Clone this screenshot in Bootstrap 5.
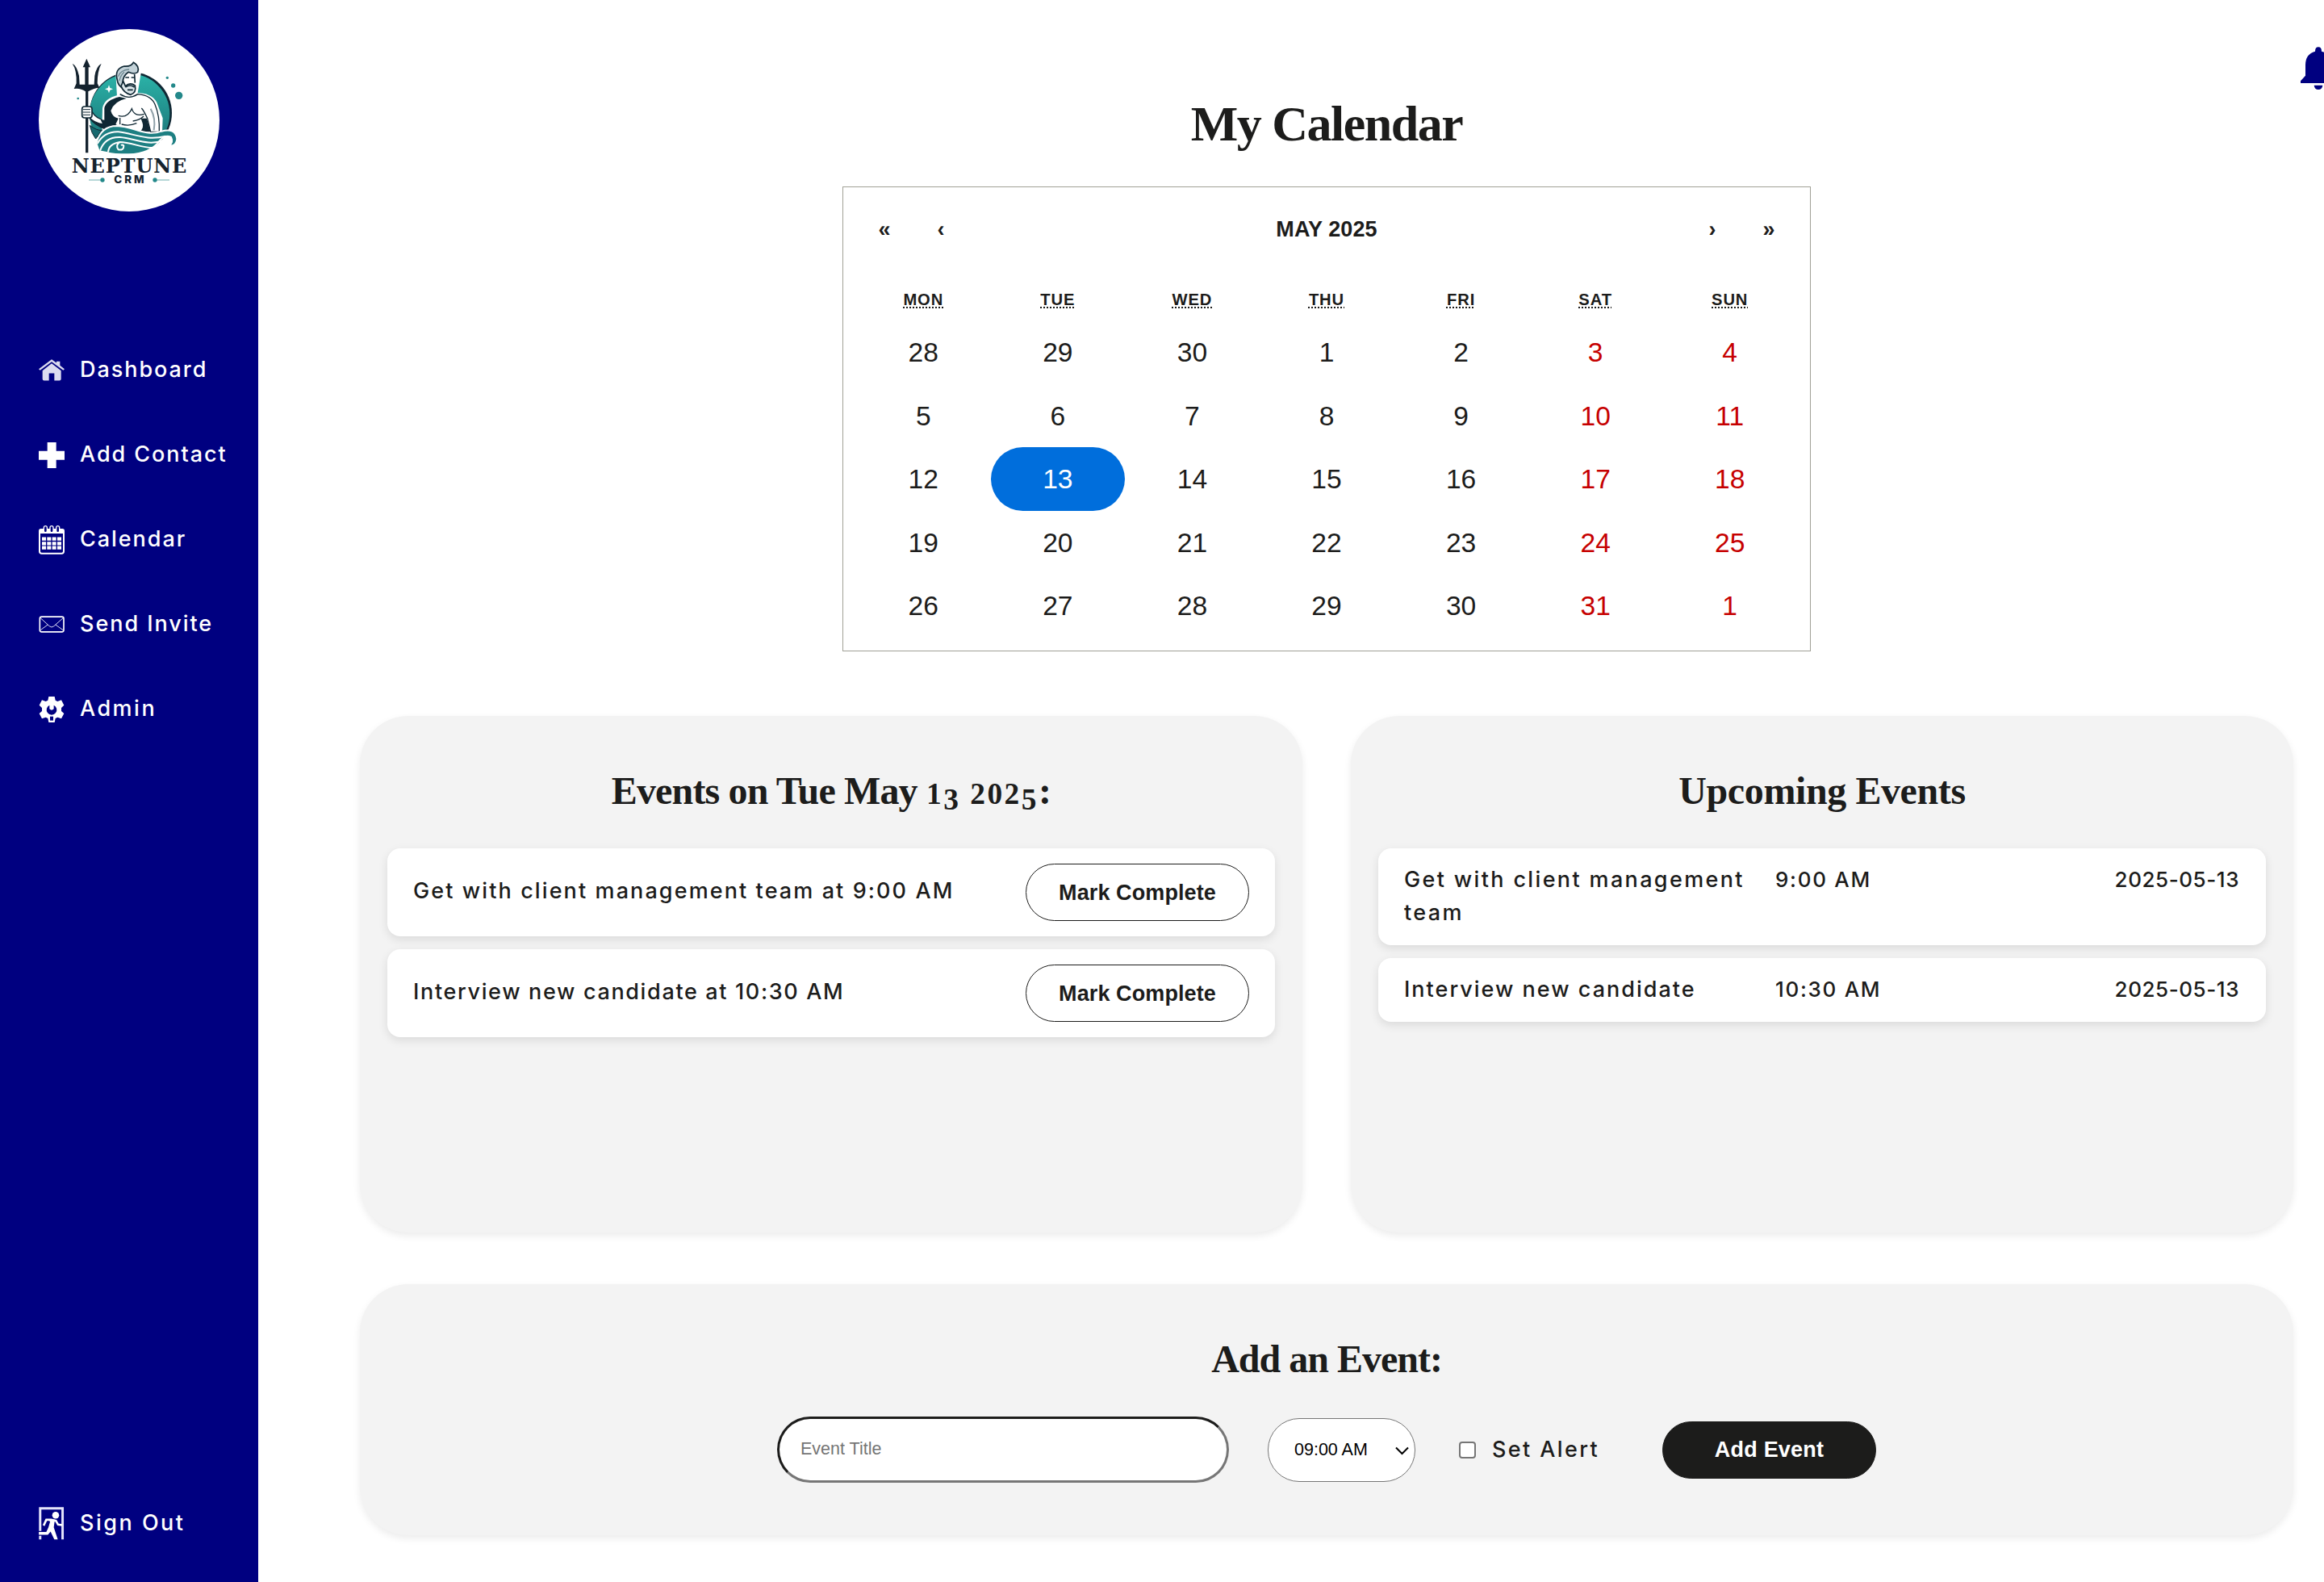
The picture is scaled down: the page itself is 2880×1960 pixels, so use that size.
<!DOCTYPE html>
<html lang="en">
<head>
<meta charset="utf-8">
<title>Neptune CRM</title>
<meta name="viewport" content="width=device-width, initial-scale=1">
<link href="https://cdn.jsdelivr.net/npm/bootstrap@5.3.0/dist/css/bootstrap.min.css" rel="stylesheet">
<style>
  body { font-family: Inter, "Open Sans", sans-serif; color: #1c1c1b; height: 1960px; background: #fff; font-size: 27px; font-weight: 450; }
  .side-panel { width: 320px; background: #000080; padding: 36px 0 20px 48px; }
  .side-panel .brand { width: 224px; height: 226px; }
  .side-menu { margin-top: 144px; }
  .side-link { height: 105px; gap: 19px; color: #fff; font-size: 27px; font-weight: 500; letter-spacing: 1.95px; text-decoration: none; white-space: nowrap; }
  .side-link svg { width: 32px; flex: none; }
  .side-short { letter-spacing: 2.5px; }
  .page-main { padding: 113px 38px 0 126px; overflow: hidden; }
  .alert-bell { right: -15px; top: 58px; width: 44px; height: 54px; }
  h1, h2 { font-family: "Liberation Serif", serif; font-weight: 700; white-space: nowrap; }
  h1 { font-size: 62px; line-height: 80px; margin: 0 0 38px; letter-spacing: -1.5px; }
  h2 { font-size: 48px; line-height: 60px; margin: 0 0 41px; letter-spacing: -.4px; }
  .day-title { letter-spacing: -.85px; }
  .form-title { letter-spacing: -1px; }
  .oldstyle { font-size: .78em; line-height: 0; letter-spacing: 2.5px; }
  .oldstyle i { font-style: normal; vertical-align: -.2em; line-height: 0; }
  .month-box { width: 1200px; height: 576px; padding: 16px; border: 1px solid #a0a096; font-family: "Liberation Sans", Arial, sans-serif; font-weight: 400; }
  .month-nav { height: 72px; margin-bottom: 26px; font-size: 27px; font-weight: 700; letter-spacing: .1px; }
  .month-nav button { width: 70px; border: 0; background: none; padding: 0; font: inherit; color: inherit; }
  .week-grid { display: grid; grid-template-columns: repeat(7, 1fr); text-align: center; }
  .week-names { height: 51px; line-height: 50px; font-size: 20.2px; font-weight: 700; letter-spacing: .9px; }
  .week-names abbr { text-decoration: underline dotted 2px; text-decoration-skip-ink: none; text-underline-offset: 2px; cursor: default; }
  .week-days { grid-auto-rows: 78.6px; font-size: 33.6px; line-height: 79px; }
  .off-day { color: #c60000; }
  .picked { background: #006edc; color: #fff; border-radius: 40px; }
  .panel { background: #f3f3f3; border-radius: 60px; box-shadow: 0 4px 10px rgba(0,0,0,.08); padding: 63px 34px 0; }
  .panel-row { gap: 60px; margin: 80px 0 64px; }
  .panel-row .panel { height: 640px; flex: 1 1 0; }
  .entry { background: #fff; border-radius: 16px; box-shadow: 0 4px 12px rgba(0,0,0,.1); padding: 0 32px; margin-bottom: 16px; }
  .entry-task { height: 109px; }
  .entry-task > span { padding-bottom: 2px; }
  .entry-next { line-height: 41px; padding: 18px 33px 20px 32px; }
  .entry-next .what { width: 460px; padding-right: 30px; }
  .entry-next .when { font-size: 26px; letter-spacing: 1.7px; }
  .entry-next .date { font-size: 26px; letter-spacing: .55px; }
  .wide-a { letter-spacing: 2.1px; }
  .wide-b { letter-spacing: 1.65px; }
  .wide-c { letter-spacing: 2.35px; }
  .wide-d { letter-spacing: 2px; }
  .pill { height: 71px; border-radius: 36px; border: 1px solid #1c1c1b; background: #fff; color: #1c1c1b; font: 700 27px "Liberation Sans", Arial, sans-serif; letter-spacing: .1px; padding: 1px 0 0; }
  .pill-done { width: 277px; }
  .pill-add { width: 265px; background: #1c1c1b; color: #fff; margin-left: auto; padding-bottom: 1px; letter-spacing: .2px; }
  .panel-form { height: 311px; }
  .event-form { width: 1362px; height: 82px; font-family: "Liberation Sans", Arial, sans-serif; }
  .title-box { width: 560px; height: 82px; border: 3px solid; border-color: #1c1c1b #767676 #767676 #1c1c1b; border-radius: 41px; padding: 0 26px 1px; background: #fff; font-size: 21.5px; }
  .title-box::placeholder { color: #757575; opacity: 1; }
  .time-wrap { margin: 0 54px 0 48px; }
  .time-box { width: 183px; height: 79px; border: 1px solid #767676; border-radius: 39px; background: #fff; appearance: none; padding: 0 32px; font-size: 21.5px; color: #000; }
  .time-wrap svg { right: 8px; top: 35px; width: 17px; height: 11px; }
  .alert-check { width: 21px; height: 21px; appearance: none; border: 2px solid #767676; border-radius: 4px; background: #fff; margin: 0 20px 0 0; }
  .alert-label { font-family: Inter, sans-serif; letter-spacing: 2.4px; }
</style>
</head>
<body class="d-flex overflow-hidden">

<aside class="side-panel d-flex flex-column flex-shrink-0">
  <svg class="brand" viewBox="144 108 672 678">
    <defs>
      <linearGradient id="sea" x1="0" y1="0" x2="0" y2="1"><stop offset="0" stop-color="#2bb3a8"/><stop offset="1" stop-color="#17696f"/></linearGradient>
    </defs>
    <ellipse cx="480" cy="447" rx="336" ry="339" fill="#fff"/>
    <!-- disc behind the figure -->
    <circle cx="486" cy="420" r="153" fill="#0f2733"/>
    <circle cx="482" cy="423" r="149" fill="url(#sea)"/>
    <path d="M405 316l4 11 11 4-11 4-4 11-4-11-11-4 11-4z" fill="#fff"/>
    <!-- body -->
    <path d="M384 478L386 402Q392 370 440 358L436 290Q428 250 460 242Q490 240 494 228L520 266L506 350Q560 350 578 382L600 440L598 492Z" fill="#fff" stroke="#fff" stroke-width="10" stroke-linejoin="round"/>
    <path d="M338 425Q366 444 388 446L388 402Q394 372 444 360L470 366Q424 376 412 412Q418 436 440 440L430 462L460 480H388Q350 466 332 440Z" fill="#0f2733"/>
    <path d="M446 350Q480 372 512 350Q562 354 576 388Q594 430 592 490H560L548 440Q534 410 526 402M440 430Q474 440 490 404Q500 436 536 424M446 438V462M452 462Q480 470 508 458M494 450Q520 446 534 432" fill="none" stroke="#0f2733" stroke-width="4"/>
    <path d="M524 440L546 440 560 490H520Q536 474 530 458Z" fill="#0f2733"/>
    <path d="M560 404Q580 440 572 484" fill="none" stroke="#8fa0a8" stroke-width="6"/>
    <!-- head -->
    <path d="M436 298Q424 256 462 246Q488 248 496 232Q520 246 512 268Q498 278 478 268Q458 280 456 306L460 330Q438 318 436 298Z" fill="#c3d2d8" stroke="#0f2733" stroke-width="5"/>
    <path d="M440 284Q448 260 480 258M444 300Q448 280 462 268" fill="none" stroke="#6e8892" stroke-width="4"/>
    <path d="M458 302L466 320Q484 304 502 318Q508 344 486 352Q460 346 450 320Z" fill="#dce6ea" stroke="#0f2733" stroke-width="5"/>
    <path d="M466 288H480M488 288H500M500 276L502 308M466 324Q484 312 500 324M474 334H494" fill="none" stroke="#0f2733" stroke-width="5"/>
    <!-- trident -->
    <path d="M269 236Q286 244 294 282L296 314H316V250H308L322 218L336 250H329V314H350L352 282Q358 246 377 236Q362 264 362 310L370 326Q350 326 328 340V568H318V340Q298 326 275 330L284 310Q286 262 269 236Z" fill="#14222e"/>
    <path d="M336 402Q346 432 376 444L384 462Q350 458 330 434Z" fill="#fff" stroke="#0f2733" stroke-width="4"/>
    <rect x="305" y="396" width="37" height="42" rx="9" fill="#fff" stroke="#0f2733" stroke-width="5"/>
    <path d="M308 407H336M308 417H336M308 427H336" stroke="#0f2733" stroke-width="3"/>
    <!-- waves -->
    <path d="M334 466Q360 486 378 484L356 516Q340 496 334 466Z" fill="#17696f" stroke="#0f2733" stroke-width="3"/>
    <path d="M358 532Q376 468 434 468C500 470 540 510 600 488Q652 474 658 516Q656 544 628 542Q646 530 636 510Q616 500 596 520Q560 572 478 574Q420 574 400 568L368 562Z" fill="#1d7f82" stroke="#fff" stroke-width="6"/>
    <path d="M362 534Q388 488 440 490C500 496 540 524 616 506M372 560Q390 508 446 510C500 514 550 544 606 522M402 566Q404 534 446 528C490 528 540 556 580 548M446 528Q428 540 440 556Q460 560 460 542Q456 536 450 540" fill="none" stroke="#fff" stroke-width="6"/>
    <g fill="#23888a"><circle cx="622" cy="289" r="5"/><circle cx="644" cy="318" r="8"/><circle cx="665" cy="355" r="14"/><circle cx="290" cy="366" r="4"/><circle cx="381" cy="669" r="8"/><circle cx="576" cy="669" r="8"/></g>
    <path d="M330 669H376M582 669H630" stroke="#23888a" stroke-width="2"/>
    <text x="266" y="641" textLength="428" lengthAdjust="spacing" font-family="DejaVu Serif, serif" font-weight="700" font-size="72" fill="#14222e">NEPTUNE</text>
    <text x="424" y="682" textLength="112" font-family="Inter, sans-serif" font-weight="800" font-size="40" fill="#14222e">CRM</text>
  </svg>

  <nav class="side-menu d-flex flex-column">
    <a class="side-link d-flex align-items-center" href="#">
      <svg viewBox="0 0 96 80" height="27" fill="#dcdcf0"><path d="M48 0L66 13V8H79V23L96 36 91 41 48 9 5 41 0 36Z"/><path d="M48 15L83 42V73Q83 79 77 79H58V52H38V79H20Q14 79 14 73V42Z"/></svg>
      <span>Dashboard</span></a>
    <a class="side-link d-flex align-items-center" href="#">
      <svg viewBox="0 0 96 96" height="32" fill="#fff"><path d="M32 0H65V32H96V65H65V96H32V65H0V32H32Z"/></svg>
      <span>Add Contact</span></a>
    <a class="side-link d-flex align-items-center" href="#">
      <svg viewBox="0 0 96 108" height="36" fill="none" stroke="#fff"><path d="M3 24V96Q3 104 11 104H85Q93 104 93 96V24" stroke-width="6"/><path d="M0 30V20Q0 12 8 12H88Q96 12 96 20V30Z" fill="#fff" stroke="none"/><g stroke="#fff" stroke-width="4" fill="#000080"><rect x="19" y="2" width="12" height="24" rx="6"/><rect x="42" y="2" width="12" height="24" rx="6"/><rect x="65" y="2" width="12" height="24" rx="6"/></g><path d="M12 50H84M12 67H84M12 83H84" stroke-width="13" stroke-dasharray="15 4"/></svg>
      <span>Calendar</span></a>
    <a class="side-link d-flex align-items-center" href="#">
      <svg viewBox="0 0 96 62" height="21" fill="none" stroke="#fff"><rect x="4" y="3" width="89" height="56" rx="7" stroke-width="5"/><path d="M7 8L40 38Q48 45 56 38L90 8M7 52L33 33M90 52L63 33" stroke-width="3" stroke="#dcdcf5"/></svg>
      <span>Send Invite</span></a>
    <a class="side-link side-short d-flex align-items-center" href="#">
      <svg viewBox="0 0 96 96" height="32"><path d="M37 0H59L62 14 70 18 84 13 94 32 84 42V54L94 63 84 82 70 77 62 81 59 96H37L34 81 26 77 12 82 2 63 12 54V42L2 32 12 13 26 18 34 14Z" fill="#fff"/><path d="M40 32A19 19 0 1 0 56 32V46Q48 54 40 46Z" fill="#000080"/><path d="M42 74H54V89H42Z" fill="#000080"/></svg>
      <span>Admin</span></a>
  </nav>

  <a class="side-link side-short d-flex align-items-center mt-auto" href="#">
    <svg viewBox="0 0 96 124" height="41" fill="none" stroke="#fff"><path d="M5 90V5H89V122M5 108V122" stroke-width="9" stroke="#e4e4fa"/><circle cx="63" cy="31" r="13" fill="#fff" stroke="none"/><path d="M18 70L28 48H46L64 52 72 66 88 68" stroke-width="8"/><path d="M36 46L60 48 56 76 71 122H58L44 92 34 104H0V94H28L36 76 42 56Z" fill="#fff" stroke="none"/></svg>
    <span>Sign Out</span></a>
</aside>

<main class="page-main flex-grow-1 position-relative">
  <svg class="alert-bell position-absolute" viewBox="0 0 132 160" fill="#000080"><path d="M54 16Q54 0 66 0Q78 0 78 16Q114 26 114 66V106L132 126V134H0V126L18 106V66Q18 26 54 16ZM50 142H82Q80 158 66 158Q52 158 50 142Z"/></svg>

  <h1 class="text-center">My Calendar</h1>

  <section class="month-box mx-auto">
    <div class="month-nav d-flex">
      <button>«</button><button>‹</button>
      <div class="flex-grow-1 d-flex align-items-center justify-content-center">MAY 2025</div>
      <button>›</button><button>»</button>
    </div>
    <div class="week-grid week-names">
      <div><abbr>MON</abbr></div><div><abbr>TUE</abbr></div><div><abbr>WED</abbr></div><div><abbr>THU</abbr></div><div><abbr>FRI</abbr></div><div><abbr>SAT</abbr></div><div><abbr>SUN</abbr></div>
    </div>
    <div class="week-grid week-days">
      <div>28</div><div>29</div><div>30</div><div>1</div><div>2</div><div class="off-day">3</div><div class="off-day">4</div>
      <div>5</div><div>6</div><div>7</div><div>8</div><div>9</div><div class="off-day">10</div><div class="off-day">11</div>
      <div>12</div><div class="picked">13</div><div>14</div><div>15</div><div>16</div><div class="off-day">17</div><div class="off-day">18</div>
      <div>19</div><div>20</div><div>21</div><div>22</div><div>23</div><div class="off-day">24</div><div class="off-day">25</div>
      <div>26</div><div>27</div><div>28</div><div>29</div><div>30</div><div class="off-day">31</div><div class="off-day">1</div>
    </div>
  </section>

  <div class="panel-row d-flex">
    <section class="panel">
      <h2 class="day-title text-center">Events on Tue May <span class="oldstyle">1<i>3</i> 202<i>5</i></span>:</h2>
      <div class="entry entry-task d-flex align-items-center justify-content-between"><span class="wide-a">Get with client management team at 9:00 AM</span><button class="pill pill-done">Mark Complete</button></div>
      <div class="entry entry-task d-flex align-items-center justify-content-between"><span class="wide-b">Interview new candidate at 10:30 AM</span><button class="pill pill-done">Mark Complete</button></div>
    </section>
    <section class="panel">
      <h2 class="text-center">Upcoming Events</h2>
      <div class="entry entry-next d-flex"><div class="what wide-c">Get with client management team</div><div class="when flex-grow-1">9:00 AM</div><div class="date">2025-05-13</div></div>
      <div class="entry entry-next d-flex"><div class="what wide-d">Interview new candidate</div><div class="when flex-grow-1">10:30 AM</div><div class="date">2025-05-13</div></div>
    </section>
  </div>

  <section class="panel panel-form">
    <h2 class="form-title text-center">Add an Event:</h2>
    <form class="event-form mx-auto d-flex align-items-center">
      <input class="title-box" type="text" placeholder="Event Title">
      <div class="time-wrap position-relative">
        <select class="time-box d-block"><option>09:00 AM</option></select>
        <svg class="position-absolute" viewBox="0 0 17 11" fill="none" stroke="#000" stroke-width="2"><path d="M1 1.5L8.500 9 16 1.500"/></svg>
      </div>
      <input class="alert-check" type="checkbox" id="alertCheck">
      <label class="alert-label" for="alertCheck">Set Alert</label>
      <button class="pill pill-add" type="button">Add Event</button>
    </form>
  </section>
</main>

<script src="https://cdn.jsdelivr.net/npm/bootstrap@5.3.0/dist/js/bootstrap.bundle.min.js"></script>
</body>
</html>
